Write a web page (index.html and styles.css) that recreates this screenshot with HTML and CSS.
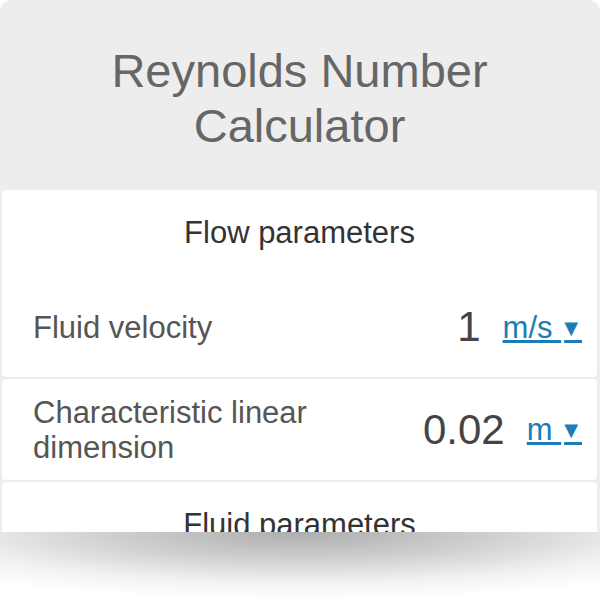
FILE: index.html
```html
<!DOCTYPE html>
<html lang="en">
<head>
<meta charset="utf-8">
<title>Reynolds Number Calculator</title>
<link rel="stylesheet" href="styles.css">
</head>
<body>
<div class="calc">
  <h1 class="calc-title">Reynolds Number Calculator</h1>
  <section class="block">
    <h2 class="block-head">Flow parameters</h2>
    <div class="row">
      <div class="label">Fluid velocity</div>
      <div class="value">1</div>
      <a class="unit" href="#">m/s <span class="caret">▼</span></a>
    </div>
  </section>
  <section class="block">
    <div class="row row-tall">
      <div class="label">Characteristic linear dimension</div>
      <div class="value">0.02</div>
      <a class="unit" href="#">m <span class="caret">▼</span></a>
    </div>
  </section>
  <section class="block">
    <h2 class="block-head">Fluid parameters</h2>
  </section>
</div>
<div class="calc-shadow"></div>
</body>
</html>
```

FILE: styles.css
```css
html, body {
  margin: 0;
  background: #ffffff;
  font-family: "Liberation Sans", Arial, sans-serif;
}

.calc {
  height: 532px;
  overflow: hidden;
  background: #ededed;
  border-radius: 12px 12px 0 0;
  padding: 0 3px 0 2px;
}

.calc-shadow {
  height: 68px;
  background:
    radial-gradient(ellipse 80% 100% at 50% 0, rgba(0, 0, 0, 0.32) 0%, rgba(0, 0, 0, 0.19) 40%, rgba(0, 0, 0, 0.05) 75%, rgba(0, 0, 0, 0) 100%);
}

.calc-title {
  margin: 0;
  padding: 43px 60px 37px;
  font-size: 47px;
  line-height: 55px;
  font-weight: normal;
  color: #666666;
  text-align: center;
}

.block {
  background: #ffffff;
  border-radius: 4px;
  margin-bottom: 2px;
}

.block-head {
  margin: 0;
  padding: 25px 0 26px;
  font-size: 31px;
  line-height: 36px;
  font-weight: normal;
  color: #333333;
  text-align: center;
}

.row {
  display: flex;
  align-items: center;
  height: 100px;
  padding: 0 15px 0 31px;
  gap: 22px;
}

.row-tall {
  height: 101px;
}

.label {
  flex: 1;
  font-size: 31px;
  line-height: 35px;
  color: #555555;
}

.value {
  font-size: 42px;
  line-height: 50px;
  color: #444444;
}

.unit {
  font-size: 31px;
  line-height: 35px;
  color: #1b7db8;
  text-decoration: underline;
  white-space: nowrap;
}

.caret {
  font-family: "DejaVu Sans", sans-serif;
  font-size: 18px;
  padding-left: 3px;
  letter-spacing: 4px;
  vertical-align: 4px;
}
```
